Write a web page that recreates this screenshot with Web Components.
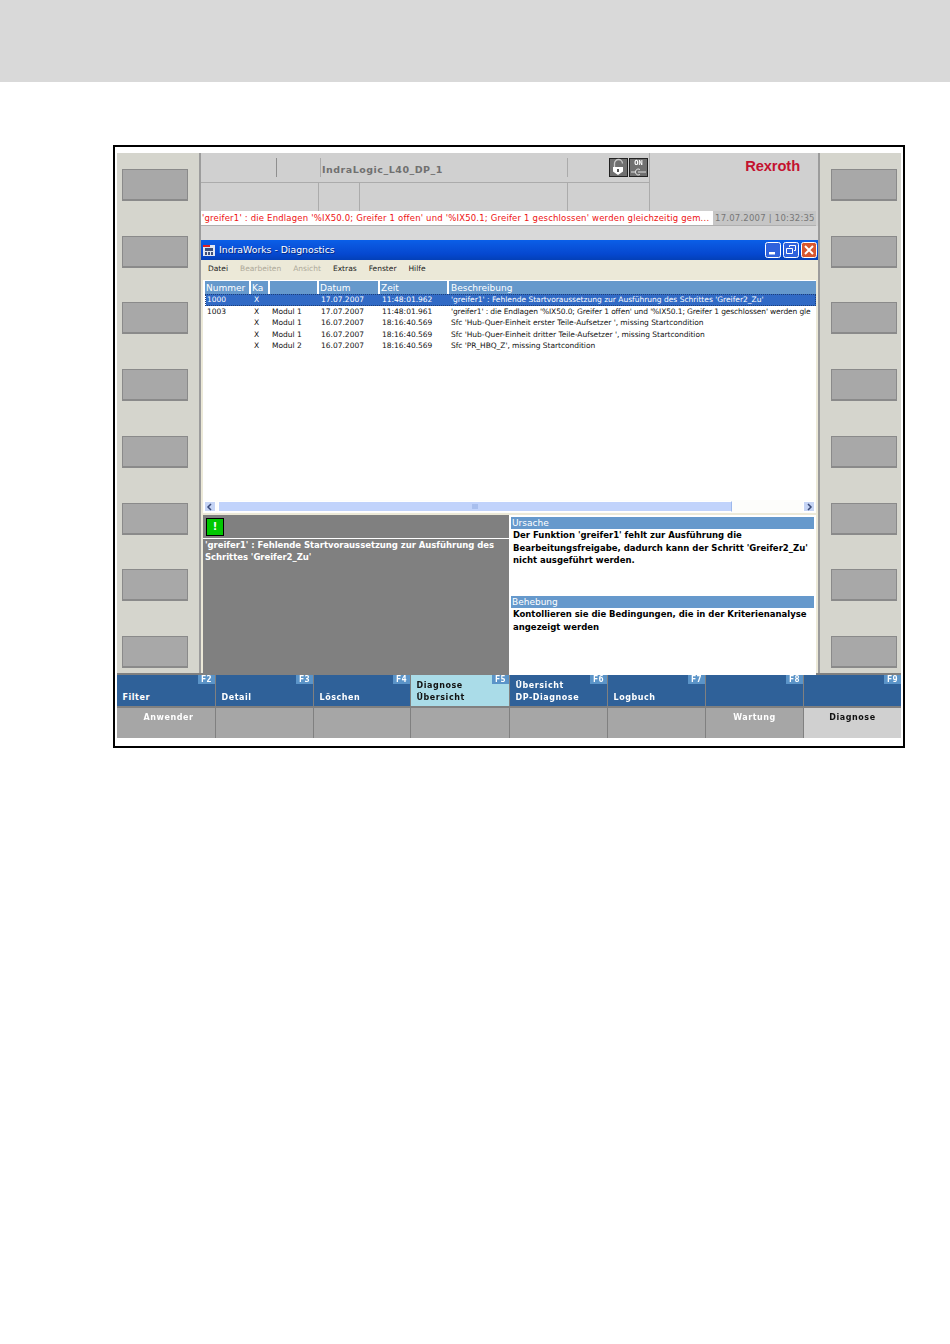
<!DOCTYPE html>
<html lang="de">
<head>
<meta charset="utf-8">
<title>IndraLogic Diagnose</title>
<style>
    html, body { margin: 0; background: #fff; }
    body { font-family: "DejaVu Sans", sans-serif; }
</style>
</head>
<body>
<hmi-page>
    <hmi-softkeys slot="left"></hmi-softkeys>
    <hmi-softkeys slot="right" class="right"></hmi-softkeys>
    <hmi-header slot="header"></hmi-header>
    <diag-window slot="window"></diag-window>
    <hmi-footer slot="footer"></hmi-footer>
</hmi-page>

<script>
class HmiPage extends HTMLElement {
    constructor() {
        super();
        this.attachShadow({mode: 'open'});
        this.shadowRoot.innerHTML = `
            <style>
                :host { display: block; height: 1344px; }
                .band { height: 82px; background: #d9d9d9; }
                .frame {
                    box-sizing: border-box;
                    width: 792px;
                    height: 603px;
                    margin: 63px 0 0 113px;
                    padding: 6px 2px 8px;
                    border: 2px solid #000;
                    display: flex;
                    flex-direction: column;
                }
                .soft { filter: blur(.3px); }
                .upper {
                    height: 520px;
                    display: grid;
                    grid-template-columns: 84px 617px 83px;
                }
                .main { display: flex; flex-direction: column; background: #d9d9d9; min-width: 0; }
            </style>
            <div class="band"></div>
            <div class="frame">
                <div class="soft">
                    <div class="upper">
                        <slot name="left"></slot>
                        <div class="main">
                            <slot name="header"></slot>
                            <slot name="window"></slot>
                        </div>
                        <slot name="right"></slot>
                    </div>
                    <slot name="footer"></slot>
                </div>
            </div>
        `;
    }
}

class HmiSoftkeys extends HTMLElement {
    constructor() {
        super();
        this.attachShadow({mode: 'open'});
        this.shadowRoot.innerHTML = `
            <style>
                :host {
                    box-sizing: border-box;
                    display: flex;
                    flex-direction: column;
                    justify-content: space-between;
                    height: 520px;
                    padding: 16px 11px 5px 5px;
                    background: #d5d5cd;
                    border-right: 2px solid #9c9c9c;
                }
                :host(.right) {
                    padding: 16px 4px 5px 11px;
                    border-right: 0;
                    border-left: 2px solid #9c9c9c;
                }
                div {
                    box-sizing: border-box;
                    width: 66px;
                    height: 32px;
                    background: #a8a8a8;
                    border: 1px solid #8a8a8a;
                    border-bottom-width: 2px;
                }
            </style>
            ${'<div></div>'.repeat(8)}
        `;
    }
}

class HmiHeader extends HTMLElement {
    constructor() {
        super();
        this.attachShadow({mode: 'open'});
        this.shadowRoot.innerHTML = `
            <style>
                :host { display: block; background: #d0d0d0; color: #6c6c6c; }
                .top { height: 58px; display: grid; grid-template-columns: 449px 1fr; }
                .cells { border-right: 1px solid #ababab; display: flex; flex-direction: column; }
                .row1 { height: 30px; box-sizing: border-box; padding: 5px 0; display: grid;
                        grid-template-columns: 76px 44px 247px 1fr; border-bottom: 1px solid #ababab; }
                .row1 > div { border-right: 1px solid #8f8f8f; box-sizing: border-box; height: 19px; }
                .row1 > div:last-child { border: 0; }
                .row1 .wide { border-right-color: #ababab; }
                .row1 .label { font: bold 9.5px "DejaVu Sans", sans-serif; letter-spacing: .5px; padding: 6px 0 0 1px;
                               color: #707070; white-space: nowrap; border-right-color: #ababab; }
                .row2 { flex: 1; display: grid; grid-template-columns: 118px 41px 208px 1fr; }
                .row2 > div { border-right: 1px solid #ababab; }
                .row2 > div:last-child { border: 0; }
                .icons { display: flex; gap: 1px; padding-left: 41px; }
                .icons svg { display: block; }
                .on { position: relative; width: 19px; height: 19px; box-sizing: border-box; background: #707070;
                      border: 1px solid #222; color: #fff; font: bold 7px/8px "DejaVu Sans Mono", monospace;
                      text-align: center; }
                .on svg { position: absolute; left: 0; top: 9px; }
                .brand { font: bold 14.7px/16px "Liberation Sans", sans-serif; color: #c4122f; text-align: right;
                         padding: 5px 18px 0 0; letter-spacing: -.1px; }
                .msg { height: 15px; display: flex; border-bottom: 1px solid #b0b0b0; box-sizing: border-box;
                       font: 8.5px/15px "DejaVu Sans", sans-serif; margin-right: 2px; }
                .text { width: 512px; background: #fff; color: #ee1111; padding-left: 1px; box-sizing: border-box;
                        white-space: nowrap; overflow: hidden; letter-spacing: .18px; }
                .time { flex: 1; background: #c6c6c6; color: #777; padding-left: 2px; white-space: nowrap; letter-spacing: .22px; }
                .gap { height: 14px; background: #d9d9d9; }
            </style>
            <div class="top">
                <div class="cells">
                    <div class="row1">
                        <div></div>
                        <div class="wide"></div>
                        <div class="label">IndraLogic_L40_DP_1</div>
                        <div class="icons">
                            <svg width="19" height="19" viewBox="0 0 19 19">
                                <rect x=".5" y=".5" width="18" height="18" fill="#707070" stroke="#222"/>
                                <path d="M5.5 9V5.5a4 4 0 0 1 8 0" fill="none" stroke="#c8c8c8" stroke-width="1.3"/>
                                <path d="M4 9h10v4.5L9 17l-5-3.5z" fill="#fff"/>
                                <rect x="8" y="11" width="2" height="3" fill="#555"/>
                            </svg>
                            <div class="on">ON
                                <svg width="17" height="8" viewBox="0 0 17 8">
                                    <path d="M1 4h5M11 4h5" stroke="#ddd" fill="none"/>
                                    <path d="M10 1.5a3 3 0 1 0 0 5M8 4h3" stroke="#ddd" fill="none"/>
                                </svg>
                            </div>
                        </div>
                    </div>
                    <div class="row2"><div></div><div></div><div></div><div></div></div>
                </div>
                <div class="brand">Rexroth</div>
            </div>
            <div class="msg">
                <div class="text">'greifer1' : die Endlagen '%IX50.0; Greifer 1 offen' und '%IX50.1; Greifer 1 geschlossen' werden gleichzeitig gem...</div>
                <div class="time">17.07.2007 | 10:32:35</div>
            </div>
            <div class="gap"></div>
        `;
    }
}

class DiagTable extends HTMLElement {
    constructor() {
        super();
        const columns = ['Nummer', 'Ka', '', 'Datum', 'Zeit', 'Beschreibung'];
        const rows = [
            ['1000', 'X', '', '17.07.2007', '11:48:01.962', "'greifer1' : Fehlende Startvoraussetzung zur Ausführung des Schrittes 'Greifer2_Zu'"],
            ['1003', 'X', 'Modul 1', '17.07.2007', '11:48:01.961', "'greifer1' : die Endlagen '%IX50.0; Greifer 1 offen' und '%IX50.1; Greifer 1 geschlossen' werden gle"],
            ['', 'X', 'Modul 1', '16.07.2007', '18:16:40.569', "Sfc 'Hub-Quer-Einheit erster Teile-Aufsetzer ', missing Startcondition"],
            ['', 'X', 'Modul 1', '16.07.2007', '18:16:40.569', "Sfc 'Hub-Quer-Einheit dritter Teile-Aufsetzer ', missing Startcondition"],
            ['', 'X', 'Modul 2', '16.07.2007', '18:16:40.569', "Sfc 'PR_HBQ_Z', missing Startcondition"]
        ];
        this.attachShadow({mode: 'open'});
        this.shadowRoot.innerHTML = `
            <style>
                :host { display: block; height: 219px; padding: 1px 0 0 2px; background: #fff; overflow: hidden;
                        font: 7.5px/11.5px "DejaVu Sans", sans-serif; color: #111; }
                .row { display: grid; grid-template-columns: 46px 19px 49px 61px 69px 1fr; height: 11.5px; white-space: nowrap; }
                .row > span { overflow: hidden; padding-left: 2px; }
                .head { height: 13px; line-height: 14px; color: #fff; font-size: 9px; }
                .head > span { background: #6699cc; margin-right: 2px; padding-left: 1px; }
                .head > span:last-child { margin-right: 0; padding-left: 2px; }
                .selected { background: linear-gradient(#316ac5, #316ac5) 1px 0 no-repeat; color: #fff; outline: 1px dotted #1d3f78; outline-offset: -1px; }
                .row:not(.head) > span:nth-child(2) { padding-left: 3px; }
                .row:not(.head):not(.selected) > span:last-child { letter-spacing: -.05px; }
                .row.tight > span:last-child { letter-spacing: -.12px !important; }
            </style>
            <div class="row head">${columns.map(c => `<span>${c}</span>`).join('')}</div>
            ${rows.map((r, i) => `<div class="row ${i === 0 ? 'selected' : i === 1 ? 'tight' : ''}">${r.map(c => `<span>${c}</span>`).join('')}</div>`).join('')}
        `;
    }
}

class DiagWindow extends HTMLElement {
    constructor() {
        super();
        this.attachShadow({mode: 'open'});
        this.shadowRoot.innerHTML = `
            <style>
                :host { display: block; height: 433px; background: #ece9d8; }
                .title {
                    height: 20px; display: flex; align-items: center; gap: 3px; padding: 0 1px;
                    background: linear-gradient(#0a5fe8 0, #0a58e0 20%, #0548d0 70%, #0340b8 100%);
                    color: #fff; font: 9.3px/20px "DejaVu Sans", sans-serif; text-shadow: 1px 1px 0 #0a2c80;
                }
                .title .name { flex: 1; }
                .title svg { display: block; }
                .btns { display: flex; gap: 2px; }
                .menu { height: 20px; display: flex; gap: 12px; padding-left: 7px; font: 7.5px/18px "DejaVu Sans", sans-serif; color: #222; }
                .menu .off { color: #aca899; }
                .body { padding: 0 2px 0 2px; }
                .bar { height: 14px; display: flex; align-items: stretch; background: #fdfdfb; border-bottom: 1px solid #ece9d8; box-sizing: border-box; padding: 1px 1px; }
                .bar .arrow { width: 12px; background: #c5d4f5; border: 1px solid #fff; box-sizing: border-box; }
                .bar svg { display: block; }
                .bar .thumb { width: 514px; margin-left: 2px; background: #c1d3fb; border: 1px solid #fff; border-right-color: #9db8ec; box-sizing: border-box;
                              display: flex; align-items: center; justify-content: center; }
                .bar .rest { flex: 1; }
                .lower { height: 158px; margin-top: 1px; display: grid; grid-template-columns: 306px 307px; }
                .left { background: #808080; color: #fff; font: bold 8.5px/11.5px "DejaVu Sans", sans-serif; letter-spacing: -.04px; }
                .lamp { padding: 3px 0 0 3px; box-sizing: border-box; border-bottom: 1px solid #fff; margin-bottom: 1px; height: 24px; }
                .lamp div { width: 18px; height: 18px; box-sizing: border-box; background: #00c800; border: 1px solid #000; color: #fff;
                            font: bold 10px/15px "DejaVu Sans", sans-serif; text-align: center; }
                .left p { margin: 0; padding: 0 2px; }
                .right { background: #fff; padding: 2px 2px 0; color: #000; font: bold 8.5px/12.5px "DejaVu Sans", sans-serif; }
                .right h4 { margin: 0; height: 12px; background: #6699cc; color: #fff; font: 9px/12px "DejaVu Sans", sans-serif; padding-left: 1px; }
                .right p { margin: 0; padding-left: 2px; height: 67px; white-space: nowrap; }
            </style>
            <div class="title">
                <svg width="14" height="14" viewBox="0 0 14 14">
                    <rect x="1" y="2" width="12" height="11" fill="#dfe6f2"/>
                    <rect x="1" y="2" width="7" height="2" fill="#e02020"/>
                    <rect x="3" y="5" width="8" height="3" fill="#3d4f78"/>
                    <rect x="3" y="9" width="2" height="3" fill="#3d4f78"/>
                    <rect x="6" y="9" width="2" height="3" fill="#3d4f78"/>
                    <rect x="9" y="9" width="2" height="3" fill="#3d4f78"/>
                </svg>
                <span class="name">IndraWorks - Diagnostics</span>
                <div class="btns">
                    <svg width="16" height="16" viewBox="0 0 16 16">
                        <rect x=".5" y=".5" width="15" height="15" rx="2" fill="#2f62dc" stroke="#fff"/>
                        <rect x="4" y="10" width="6" height="2.5" fill="#fff"/>
                    </svg>
                    <svg width="16" height="16" viewBox="0 0 16 16">
                        <rect x=".5" y=".5" width="15" height="15" rx="2" fill="#2f62dc" stroke="#fff"/>
                        <path d="M6.500 5V3.500h6v5H11M3.500 6.500h6v5h-6z" fill="none" stroke="#fff"/>
                    </svg>
                    <svg width="16" height="16" viewBox="0 0 16 16">
                        <rect x=".5" y=".5" width="15" height="15" rx="2" fill="#d8572f" stroke="#fff"/>
                        <path d="M4 4l8 8M12 4l-8 8" stroke="#fff" stroke-width="2"/>
                    </svg>
                </div>
            </div>
            <div class="menu">
                <span>Datei</span><span class="off">Bearbeiten</span><span class="off">Ansicht</span>
                <span>Extras</span><span>Fenster</span><span>Hilfe</span>
            </div>
            <div class="body">
                <diag-table></diag-table>
                <div class="bar">
                    <div class="arrow"><svg width="10" height="10" viewBox="0 0 10 10"><path d="M6 2L3 5l3 3" fill="none" stroke="#3a4a78" stroke-width="1.500"/></svg></div>
                    <div class="thumb"><svg width="7" height="5" viewBox="0 0 7 5"><path d="M1 0v5M3 0v5M5 0v5" stroke="#8faae0"/></svg></div>
                    <div class="rest"></div>
                    <div class="arrow"><svg width="10" height="10" viewBox="0 0 10 10"><path d="M4 2l3 3-3 3" fill="none" stroke="#3a4a78" stroke-width="1.500"/></svg></div>
                </div>
                <div class="lower">
                    <div class="left">
                        <div class="lamp"><div>!</div></div>
                        <p>'greifer1' : Fehlende Startvoraussetzung zur Ausführung des Schrittes 'Greifer2_Zu'</p>
                    </div>
                    <div class="right">
                        <h4>Ursache</h4>
                        <p>Der Funktion 'greifer1' fehlt zur Ausführung die<br>Bearbeitungsfreigabe, dadurch kann der Schritt 'Greifer2_Zu'<br>nicht ausgeführt werden.</p>
                        <h4>Behebung</h4>
                        <p>Kontollieren sie die Bedingungen, die in der Kriterienanalyse<br>angezeigt werden</p>
                    </div>
                </div>
            </div>
        `;
    }
}

class HmiFooter extends HTMLElement {
    constructor() {
        super();
        const fkeys = [
            ['F2', 'Filter'], ['F3', 'Detail'], ['F4', 'Löschen'], ['F5', 'Diagnose<br>Übersicht', 'active'],
            ['F6', 'Übersicht<br>DP-Diagnose'], ['F7', 'Logbuch'], ['F8', ''], ['F9', '']
        ];
        const tabs = [['Anwender', 'nudge'], [''], [''], [''], [''], [''], ['Wartung'], ['Diagnose', 'active']];
        this.attachShadow({mode: 'open'});
        this.shadowRoot.innerHTML = `
            <style>
                :host { display: block; height: 65px; box-sizing: border-box; background: #808080; padding-top: 2px;
                        font: bold 8px/11.5px "DejaVu Sans", sans-serif; letter-spacing: .55px; }
                .row { display: grid; grid-template-columns: 98px 97px 96px 98px 97px 97px 97px 1fr; column-gap: 1px; }
                .fkeys { height: 31px; margin-bottom: 2px; }
                .tabs { height: 30px; }
                .key { position: relative; background: #2f6199; color: #fff; display: flex; align-items: flex-end;
                       padding: 0 0 3px 5.5px; box-sizing: border-box; white-space: nowrap; }
                .key.active { background: #aadce8; color: #111; }
                .key i { position: absolute; top: 0; right: 0; width: 17px; height: 9px; background: #5b94c8; color: #fff;
                         font: bold 8.5px/9px "DejaVu Sans Mono", monospace; letter-spacing: .5px; text-align: center; }
                .tab { background: #a6a6a6; color: #fff; text-align: center; padding-top: 4px; }
                .tab.nudge { padding-left: 5px; }
                .tab.active { background: #d0d0d0; color: #111; }
            </style>
            <div class="row fkeys">
                ${fkeys.map(k => `<div class="key ${k[2] || ''}"><i>${k[0]}</i><span>${k[1]}</span></div>`).join('')}
            </div>
            <div class="row tabs">
                ${tabs.map(t => `<div class="tab ${t[1] || ''}">${t[0]}</div>`).join('')}
            </div>
        `;
    }
}

customElements.define('hmi-page', HmiPage);
customElements.define('hmi-softkeys', HmiSoftkeys);
customElements.define('hmi-header', HmiHeader);
customElements.define('diag-table', DiagTable);
customElements.define('diag-window', DiagWindow);
customElements.define('hmi-footer', HmiFooter);
</script>
</body>
</html>
